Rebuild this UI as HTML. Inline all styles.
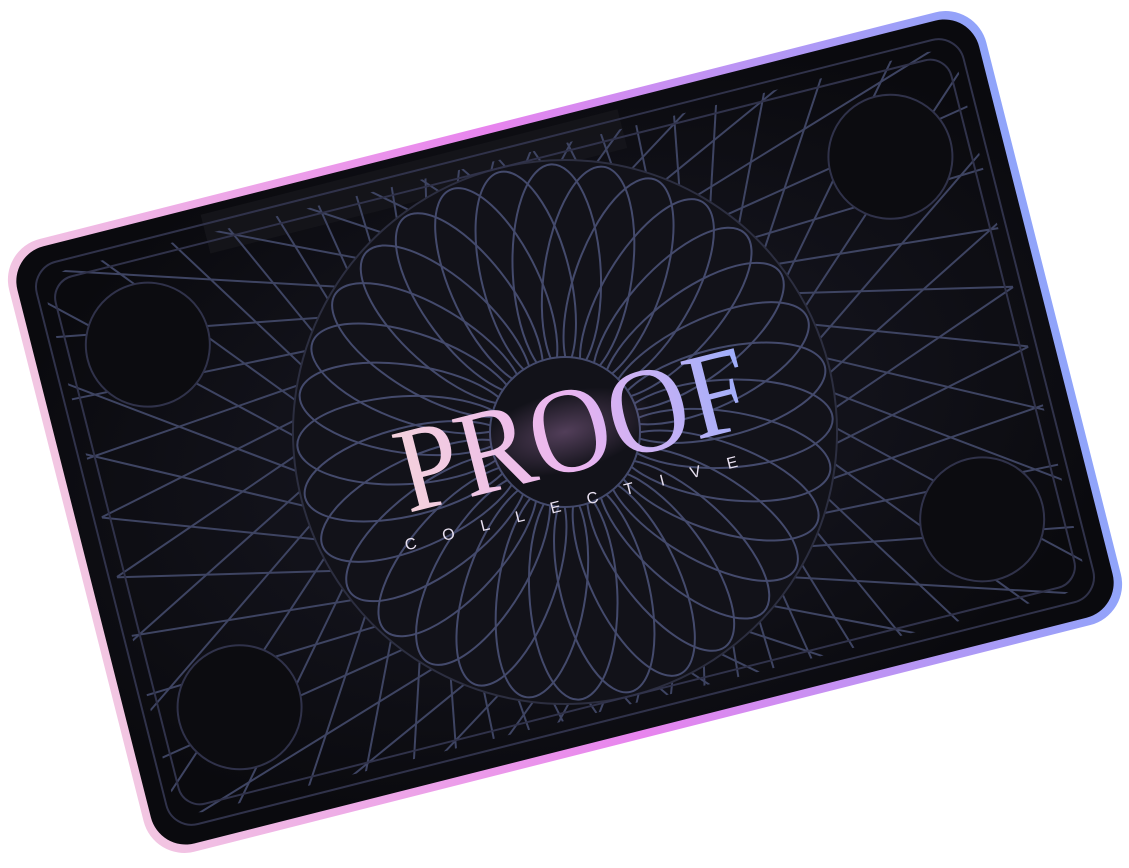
<!DOCTYPE html>
<html><head><meta charset="utf-8"><style>
html,body{margin:0;padding:0;background:#fff;width:1129px;height:868px;overflow:hidden}
svg{display:block}
</style></head><body>
<svg width="1129" height="868" viewBox="0 0 1129 868" xmlns="http://www.w3.org/2000/svg">
<defs>
<linearGradient id="bd" x1="0" y1="0" x2="1" y2="0">
<stop offset="0" stop-color="#f2c6e2"/><stop offset="0.5" stop-color="#e884ee"/><stop offset="1" stop-color="#90a4fa"/>
</linearGradient>
<radialGradient id="bg" cx="0.5" cy="0.5" r="0.6">
<stop offset="0" stop-color="#1a1a26"/><stop offset="1" stop-color="#0a0a0e"/>
</radialGradient>
<linearGradient id="tx" x1="0" y1="0" x2="1" y2="0">
<stop offset="0" stop-color="#f4d2dc"/><stop offset="0.5" stop-color="#eab4f0"/><stop offset="1" stop-color="#9eaefa"/>
</linearGradient>
<radialGradient id="glow" cx="0.5" cy="0.5" r="0.5">
<stop offset="0" stop-color="#c890d0" stop-opacity="0.35"/><stop offset="1" stop-color="#c890d0" stop-opacity="0"/>
</radialGradient>
<clipPath id="cl"><rect x="-470" y="-280" width="940" height="560" rx="30"/></clipPath>
</defs>
<g transform="translate(565,432) rotate(-14.2)">
<rect x="-504" y="-316" width="1008" height="632" rx="42" fill="url(#bd)"/>
<rect x="-496" y="-308" width="992" height="616" rx="36" fill="url(#bg)"/>
<rect x="-300" y="-300" width="430" height="40" fill="#16171c" opacity="0.8"/>
<g clip-path="url(#cl)" stroke="#3e4462" stroke-width="2" fill="none" id="lines"></g>
<circle r="272" fill="#121219" stroke="#2c2e40" stroke-width="2"/>
<g stroke="#444a6c" stroke-width="2" fill="none" id="ros"></g>
<circle r="75" fill="#121219" stroke="#444a6c" stroke-width="2"/>
<rect x="-478" y="-290" width="956" height="580" rx="26" fill="none" stroke="#30324a" stroke-width="2"/>
<rect x="-462" y="-272" width="924" height="544" rx="22" fill="none" stroke="#30324a" stroke-width="2"/>
<g fill="#0c0c10" stroke="#30324a" stroke-width="2">
<circle cx="-383" cy="-187" r="62"/><circle cx="383" cy="-187" r="62"/>
<circle cx="-383" cy="187" r="62"/><circle cx="383" cy="187" r="62"/>
</g>
<ellipse cx="0" cy="0" rx="90" ry="40" fill="url(#glow)"/>
<text x="8" y="40" text-anchor="middle" font-family="Liberation Serif, serif" font-size="122" fill="url(#tx)" textLength="360" lengthAdjust="spacingAndGlyphs">PROOF</text>
<text x="2" y="76" text-anchor="middle" font-family="Liberation Sans, sans-serif" font-size="16" letter-spacing="27" fill="#e8e0f0">COLLECTIVE</text>
</g>
<script>
var ns="http://www.w3.org/2000/svg";
var r=document.getElementById('ros');
for(var i=0;i<32;i++){var e=document.createElementNS(ns,'ellipse');e.setAttribute('cx',0);e.setAttribute('cy',-160);e.setAttribute('rx',44);e.setAttribute('ry',108);e.setAttribute('transform','rotate('+(i*360/32)+')');r.appendChild(e);}
var l=document.getElementById('lines');
for(var i=0;i<48;i++){for(var s=-1;s<=1;s+=2){var a=i*7.5*Math.PI/180;var R=230;var px=Math.cos(a)*R,py=Math.sin(a)*R;var dx=-Math.sin(a)*s,dy=Math.cos(a)*s;
var q=document.createElementNS(ns,'line');var k=0.7;
q.setAttribute('x1',px);q.setAttribute('y1',py);q.setAttribute('x2',px+(Math.cos(a)+dx*k)*900);q.setAttribute('y2',py+(Math.sin(a)+dy*k)*900);l.appendChild(q);}}
</script>
</svg>
</body></html>
